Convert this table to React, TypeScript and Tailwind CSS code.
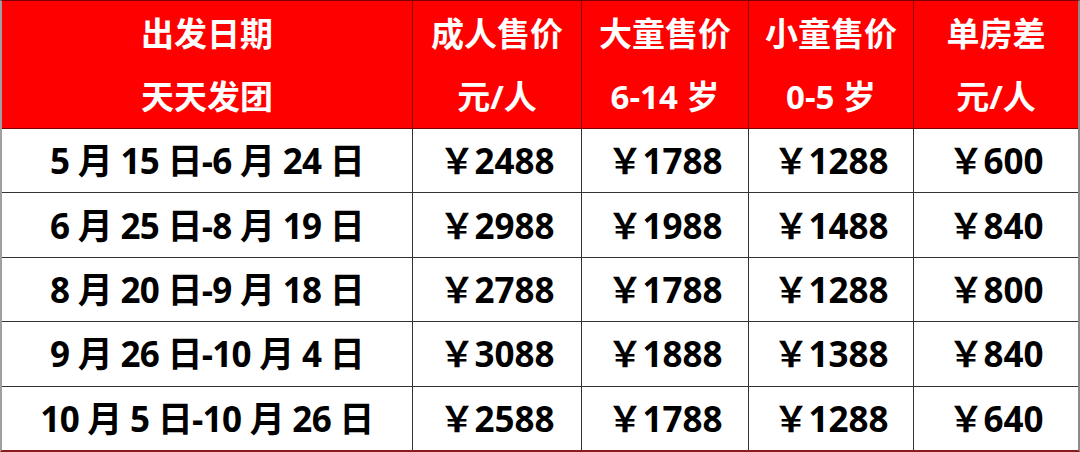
import React from "react";

const rows = [
  ["5 月 15 日-6 月 24 日", "￥2488", "￥1788", "￥1288", "￥600"],
  ["6 月 25 日-8 月 19 日", "￥2988", "￥1988", "￥1488", "￥840"],
  ["8 月 20 日-9 月 18 日", "￥2788", "￥1788", "￥1288", "￥800"],
  ["9 月 26 日-10 月 4 日", "￥3088", "￥1888", "￥1388", "￥840"],
  ["10 月 5 日-10 月 26 日", "￥2588", "￥1788", "￥1288", "￥640"],
];

const headers: [string, string][] = [
  ["出发日期", "天天发团"],
  ["成人售价", "元/人"],
  ["大童售价", "6-14 岁"],
  ["小童售价", "0-5 岁"],
  ["单房差", "元/人"],
];

export default function App() {
  return (
    <div
      className="w-[1080px] h-[452px] bg-white overflow-hidden"
      style={{ fontFamily: '"Open Sans", "Noto Sans CJK SC", sans-serif' }}
    >
      <div className="w-[1080px] h-[452px] border-l-2 border-l-[#a0a0a0] border-r-2 border-r-[#8a8a8a] border-t border-t-[#7a0000] border-b-2 border-b-[#8b1a1a] flex flex-col">
        <div className="grid grid-cols-[410px_169px_167px_165px_1fr] h-[128px] bg-[#ff0000] border-b border-b-[#7a0000]">
          {headers.map((h, i) => (
            <div
              key={i}
              className={`flex flex-col items-center justify-center text-white font-bold text-[33px] leading-[63px] ${i > 0 ? "border-l border-l-[#8b0000]" : ""}`}
            >
              <div>{h[0]}</div>
              <div>{h[1]}</div>
            </div>
          ))}
        </div>
        {rows.map((r, ri) => (
          <div
            key={ri}
            className={`grid grid-cols-[410px_169px_167px_165px_1fr] flex-1 ${ri > 0 ? "border-t border-t-[#333333]" : ""}`}
          >
            {r.map((c, ci) => (
              <div
                key={ci}
                className={`flex items-center justify-center text-black font-bold text-[35px] leading-none ${ci > 0 ? "border-l border-l-[#333333]" : "tracking-[-0.7px]"}`}
              >
                {c}
              </div>
            ))}
          </div>
        ))}
      </div>
    </div>
  );
}
